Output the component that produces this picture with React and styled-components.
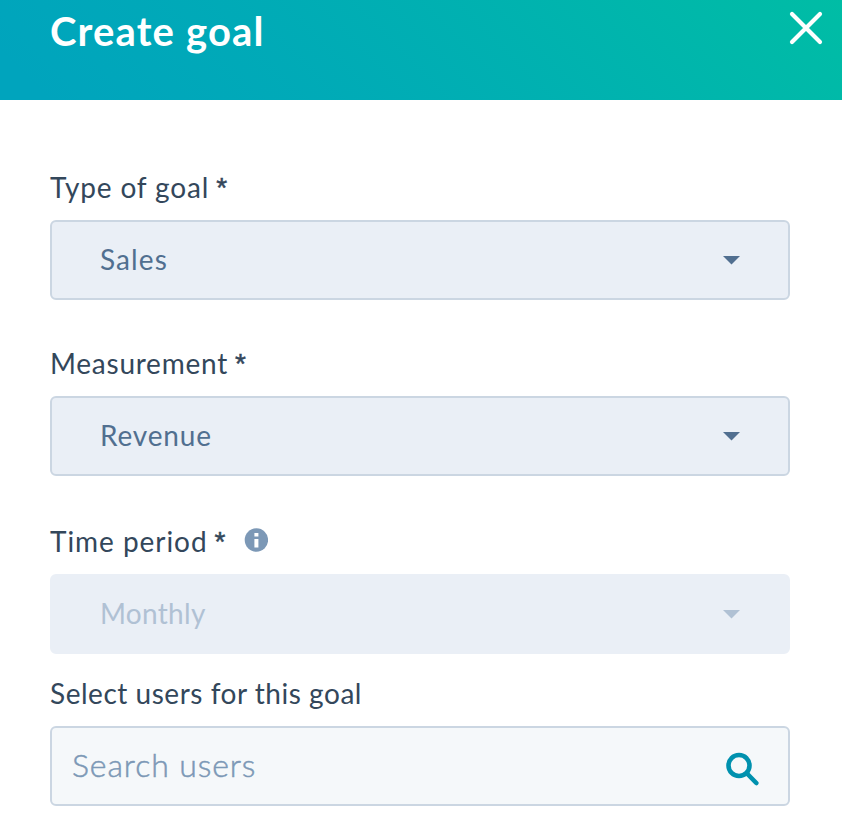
import styled, { createGlobalStyle } from "styled-components";

const COLORS = {
  text: "#33475b",
  value: "#516f90",
  disabled: "#b0c1d4",
  border: "#cbd6e2",
  fill: "#eaeff6",
  muted: "#7c98b6",
  link: "#0091ae",
};

const GlobalStyle = createGlobalStyle`
  * {
    box-sizing: border-box;
  }

  body {
    margin: 0;
    background: #fff;
    color: ${COLORS.text};
    font-family: Lato, "Liberation Sans", sans-serif;
  }
`;

const Header = styled.header`
  display: flex;
  justify-content: space-between;
  align-items: flex-start;
  height: 100px;
  padding: 7px 19px 0 50px;
  background: linear-gradient(45deg, #00a4bd 5%, 58%, #00bda5);
  color: #fff;
`;

const Title = styled.h1`
  margin: 0;
  font-size: 40px;
  line-height: 48px;
  font-weight: 700;
  letter-spacing: 1.15px;
  white-space: nowrap;
`;

const CloseButton = styled.button`
  display: flex;
  padding: 3px 0 0;
  border: 0;
  background: none;
  color: inherit;
  cursor: pointer;
`;

const Form = styled.form`
  display: flex;
  flex-direction: column;
  padding: 69px 52px 0 50px;
`;

const Field = styled.div`
  display: flex;
  flex-direction: column;
  margin-bottom: ${({ $gap }) => $gap || 0}px;
`;

const Label = styled.label`
  display: flex;
  align-items: center;
  height: 36px;
  margin-bottom: 15px;
  font-size: 28px;
  line-height: 36px;
  letter-spacing: ${({ $tracking }) => $tracking || 0}px;
  white-space: nowrap;

  & > svg {
    margin: -2px 0 0 19px;
  }
`;

const Required = styled.span`
  margin: 2px 0 0 7px;
  font-family: "Liberation Sans", sans-serif;
  letter-spacing: 0;
  -webkit-text-stroke: 0.5px ${COLORS.text};
`;

const Select = styled.button`
  display: flex;
  justify-content: space-between;
  align-items: center;
  height: 80px;
  padding: 0 48px;
  border: 2px solid ${({ disabled }) => (disabled ? COLORS.fill : COLORS.border)};
  border-radius: 6px;
  background: ${COLORS.fill};
  color: ${({ disabled }) => (disabled ? COLORS.disabled : COLORS.value)};
  font: inherit;
  font-size: 28px;
  line-height: 36px;
  letter-spacing: ${({ $tracking }) => $tracking || 0}px;

  & > span {
    margin-top: -2px;
  }
`;

const SearchBox = styled.div`
  display: flex;
  align-items: center;
  height: 80px;
  padding: 0 29px 0 20px;
  border: 2px solid ${COLORS.border};
  border-radius: 6px;
  background: #f5f8fa;

  & > svg {
    flex: none;
    margin-top: 5px;
  }
`;

const SearchInput = styled.input`
  flex: 1;
  min-width: 0;
  height: 40px;
  margin-top: -3px;
  padding: 0;
  border: 0;
  outline: 0;
  background: none;
  color: ${COLORS.text};
  font: inherit;
  font-size: 32px;
  font-weight: 300;
  letter-spacing: 0.9px;

  &::placeholder {
    color: ${COLORS.muted};
    opacity: 1;
    -webkit-text-stroke: 0.5px ${COLORS.muted};
  }
`;

const CloseIcon = () => (
  <svg width="34" height="36" viewBox="0 0 34 36" fill="none">
    <path
      d="M3 4 31 32M31 4 3 32"
      stroke="currentColor"
      strokeWidth="4.2"
      strokeLinecap="round"
    />
  </svg>
);

const Caret = () => (
  <svg width="17" height="9" viewBox="0 0 17 9">
    <path d="M0 0h17L8.5 8.5z" fill="currentColor" />
  </svg>
);

const InfoIcon = () => (
  <svg width="24" height="24" viewBox="0 0 24 24">
    <circle cx="12.4" cy="12" r="11.7" fill={COLORS.muted} />
    <path d="M10.4 5h4v3.4h-4zM10.4 11h4v8.5h-4z" fill="#fff" />
  </svg>
);

const SearchIcon = () => (
  <svg width="34" height="34" viewBox="0 0 34 34" fill="none" stroke={COLORS.link}>
    <circle cx="14" cy="13.5" r="10.5" strokeWidth="4.6" />
    <path d="M22 21.5 31.3 31" strokeWidth="4.6" strokeLinecap="round" />
  </svg>
);

const FIELDS = [
  { label: "Type of goal", value: "Sales", gap: 45, tracking: 0.85, valueTracking: 1.1 },
  { label: "Measurement", value: "Revenue", gap: 47, tracking: 0.75, valueTracking: 0.85 },
  {
    label: "Time period",
    value: "Monthly",
    gap: 21,
    tracking: 0.95,
    valueTracking: 0.3,
    info: true,
    disabled: true,
  },
];

const App = () => {
  return (
    <>
      <GlobalStyle />
      <Header>
        <Title>Create goal</Title>
        <CloseButton aria-label="Close">
          <CloseIcon />
        </CloseButton>
      </Header>

      <Form>
        {FIELDS.map((field) => (
          <Field key={field.label} $gap={field.gap}>
            <Label $tracking={field.tracking}>
              <span>{field.label}</span>
              <Required>*</Required>
              {field.info && <InfoIcon />}
            </Label>
            <Select type="button" disabled={field.disabled} $tracking={field.valueTracking}>
              <span>{field.value}</span>
              <Caret />
            </Select>
          </Field>
        ))}

        <Field>
          <Label htmlFor="users" $tracking={0.53}>
            Select users for this goal
          </Label>
          <SearchBox>
            <SearchInput id="users" placeholder="Search users" />
            <SearchIcon />
          </SearchBox>
        </Field>
      </Form>
    </>
  );
};

export default App;
